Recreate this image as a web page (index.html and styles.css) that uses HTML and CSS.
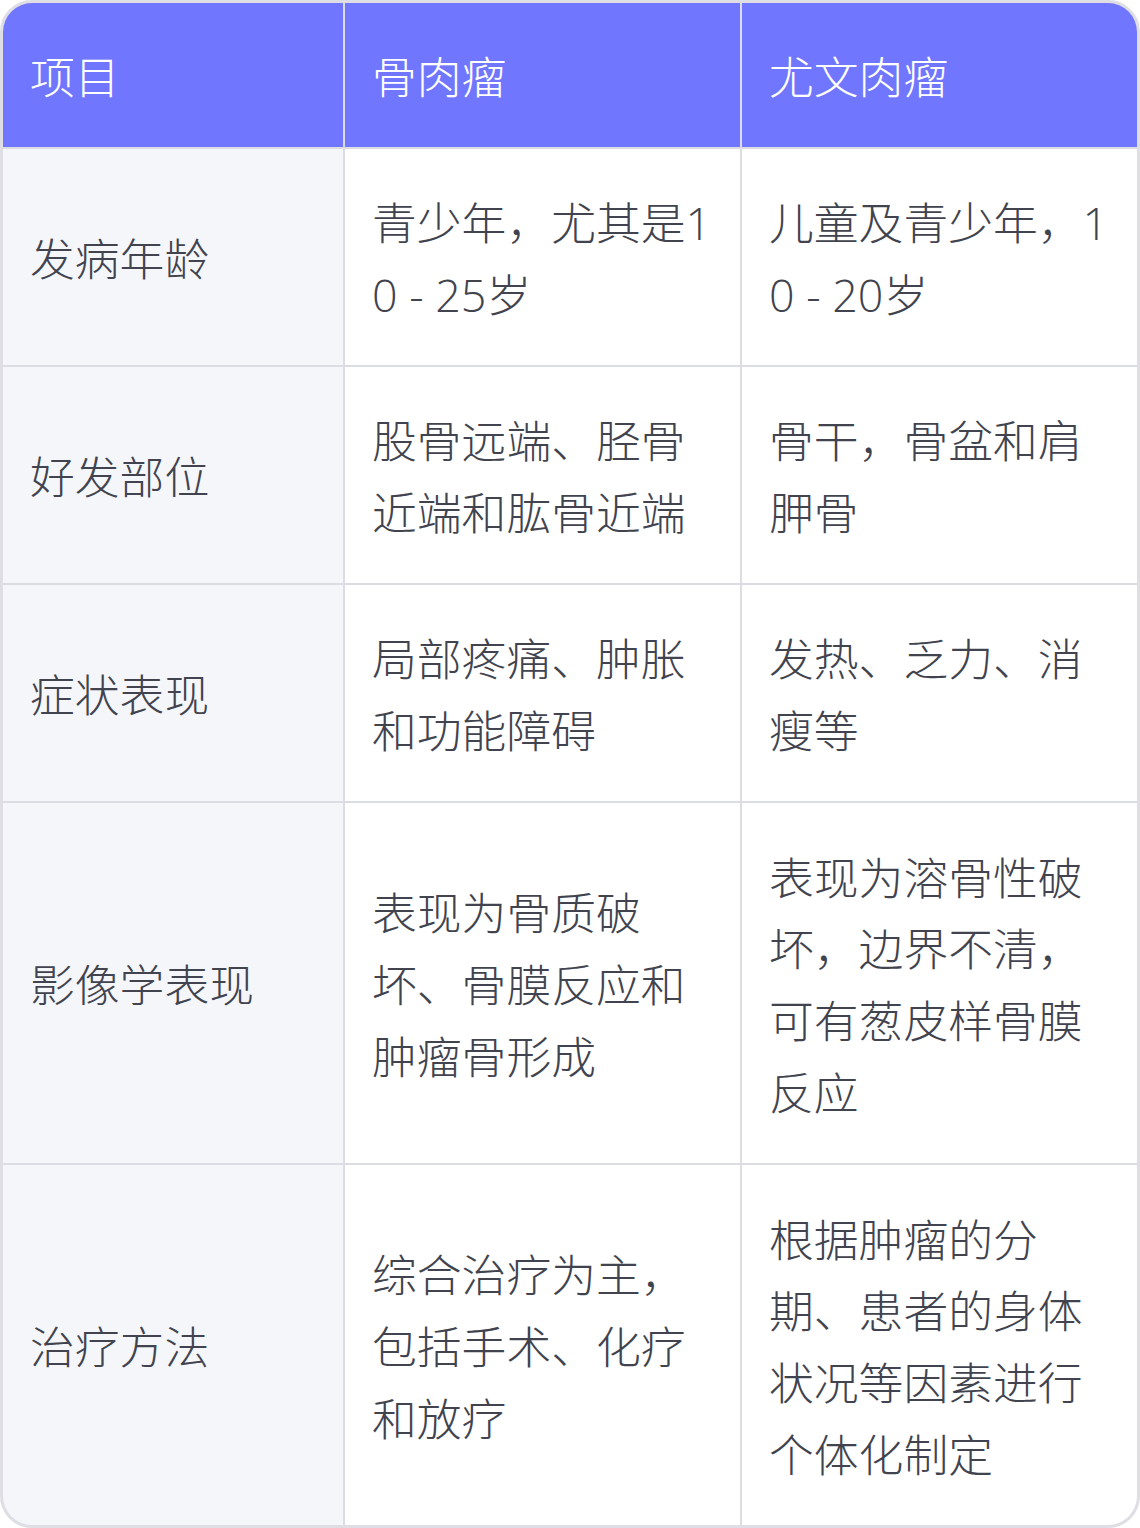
FILE: index.html
```html
<!DOCTYPE html>
<html lang="zh-CN">
<head>
<meta charset="utf-8">
<link rel="stylesheet" href="styles.css">
</head>
<body>
<div class="table">
  <div class="cell head">项目</div>
  <div class="cell head">骨肉瘤</div>
  <div class="cell head">尤文肉瘤</div>

  <div class="cell first">发病年龄</div>
  <div class="cell">青少年，尤其是10 - 25岁</div>
  <div class="cell">儿童及青少年，10 - 20岁</div>

  <div class="cell first">好发部位</div>
  <div class="cell">股骨远端、胫骨近端和肱骨近端</div>
  <div class="cell">骨干，骨盆和肩胛骨</div>

  <div class="cell first">症状表现</div>
  <div class="cell">局部疼痛、肿胀和功能障碍</div>
  <div class="cell">发热、乏力、消瘦等</div>

  <div class="cell first">影像学表现</div>
  <div class="cell">表现为骨质破坏、骨膜反应和肿瘤骨形成</div>
  <div class="cell">表现为溶骨性破坏，边界不清，可有葱皮样骨膜反应</div>

  <div class="cell first">治疗方法</div>
  <div class="cell">综合治疗为主，包括手术、化疗和放疗</div>
  <div class="cell">根据肿瘤的分期、患者的身体状况等因素进行个体化制定</div>
</div>
</body>
</html>
```

FILE: styles.css
```css
html, body {
  margin: 0;
  padding: 0;
  background: #ffffff;
}

.table {
  width: 1140px;
  height: 1528px;
  box-sizing: border-box;
  border: 3px solid #dedee4;
  border-radius: 32px;
  overflow: hidden;
  display: grid;
  grid-template-columns: 340px 395px 395px;
  grid-template-rows: 144px 216px 216px 216px 360px 360px;
  gap: 2px;
  background: #dcdde3;
  font-family: "Open Sans", "Noto Sans CJK SC", sans-serif;
  font-size: 44.8px;
  line-height: 1.6;
  font-weight: 300;
  color: #41434e;
}

.cell {
  background: #ffffff;
  padding: 4px 26px 0 27px;
  display: flex;
  align-items: center;
  word-break: break-all;
  line-break: strict;
}

.head {
  background: #7176ff;
  color: #ffffff;
}

.first {
  background: #f5f6fa;
}
```
